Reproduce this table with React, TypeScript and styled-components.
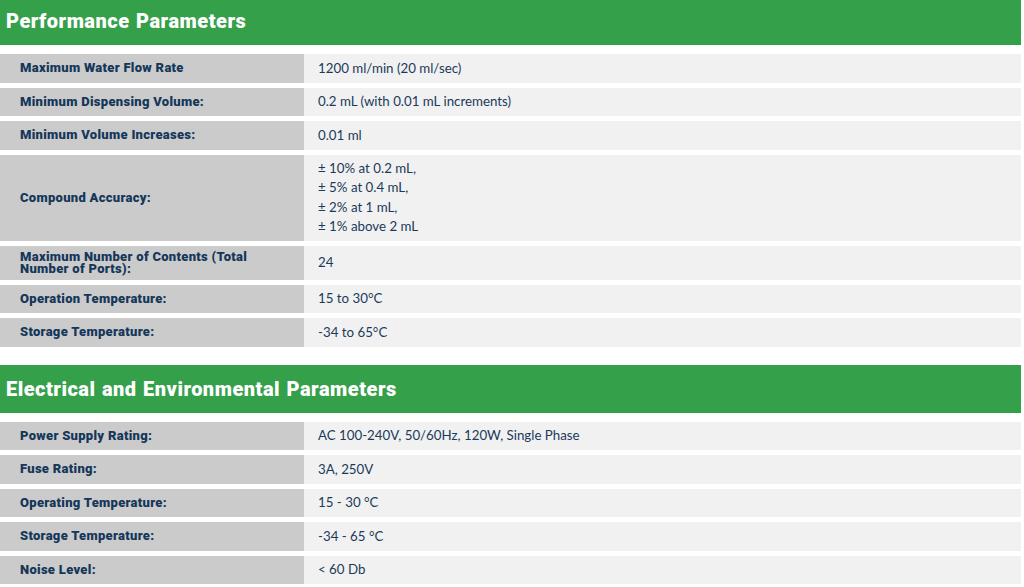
import styled, { createGlobalStyle } from 'styled-components';

const GlobalStyle = createGlobalStyle`
  html, body {
    margin: 0;
    padding: 0;
    background: #ffffff;
  }
  body {
    font-family: Lato, "Open Sans", sans-serif;
    overflow: hidden;
  }
`;

const Page = styled.div`
  width: 1021px;
  margin-top: -3px;
`;

const Section = styled.section`
  margin-bottom: 18px;
`;

const SectionTitle = styled.h2`
  margin: 0 0 9px;
  height: 48px;
  display: flex;
  align-items: center;
  padding: 0 6px;
  background: #35a04a;
  color: #ffffff;
  font-family: Roboto, sans-serif;
  font-size: 20px;
  font-weight: 900;
  letter-spacing: 0.5px;
  word-spacing: 1px;
`;

const SpecList = styled.div`
  display: grid;
  row-gap: 5px;
`;

const Row = styled.div`
  display: grid;
  grid-template-columns: 304px 1fr;
  min-height: 28.5px;
`;

const Label = styled.div`
  display: flex;
  align-items: center;
  padding: 5px 20px 5px 20px;
  background: #cbcbcb;
  color: #15375a;
  font-family: Roboto, sans-serif;
  font-size: 13px;
  font-weight: 900;
  line-height: 12px;
  letter-spacing: 0.3px;
`;

const Value = styled.div<{ $multi?: boolean }>`
  display: flex;
  flex-direction: column;
  justify-content: center;
  padding: ${p => (p.$multi ? '4px 14px' : '0 14px')};
  background: #f1f1f1;
  color: #1b3a5a;
  font-size: 13.3px;
  line-height: 19.5px;
`;

interface Spec {
  label: string;
  value: string[];
}

const performance: Spec[] = [
  { label: 'Maximum Water Flow Rate', value: ['1200 ml/min (20 ml/sec)'] },
  { label: 'Minimum Dispensing Volume:', value: ['0.2 mL (with 0.01 mL increments)'] },
  { label: 'Minimum Volume Increases:', value: ['0.01 ml'] },
  {
    label: 'Compound Accuracy:',
    value: ['± 10% at 0.2 mL,', '± 5% at 0.4 mL,', '± 2% at 1 mL,', '± 1% above 2 mL'],
  },
  { label: 'Maximum Number of Contents (Total Number of Ports):', value: ['24'] },
  { label: 'Operation Temperature:', value: ['15 to 30°C'] },
  { label: 'Storage Temperature:', value: ['-34 to 65°C'] },
];

const electrical: Spec[] = [
  { label: 'Power Supply Rating:', value: ['AC 100-240V, 50/60Hz, 120W, Single Phase'] },
  { label: 'Fuse Rating:', value: ['3A, 250V'] },
  { label: 'Operating Temperature:', value: ['15 - 30 °C'] },
  { label: 'Storage Temperature:', value: ['-34 - 65 °C'] },
  { label: 'Noise Level:', value: ['< 60 Db'] },
];

function SpecSection({ title, specs }: { title: string; specs: Spec[] }) {
  return (
    <Section>
      <SectionTitle>{title}</SectionTitle>
      <SpecList>
        {specs.map(s => (
          <Row key={s.label}>
            <Label>{s.label}</Label>
            <Value $multi={s.value.length > 1}>
              {s.value.map(line => (
                <span key={line}>{line}</span>
              ))}
            </Value>
          </Row>
        ))}
      </SpecList>
    </Section>
  );
}

export default function App() {
  return (
    <>
      <GlobalStyle />
      <Page>
        <SpecSection title="Performance Parameters" specs={performance} />
        <SpecSection title="Electrical and Environmental Parameters" specs={electrical} />
      </Page>
    </>
  );
}
